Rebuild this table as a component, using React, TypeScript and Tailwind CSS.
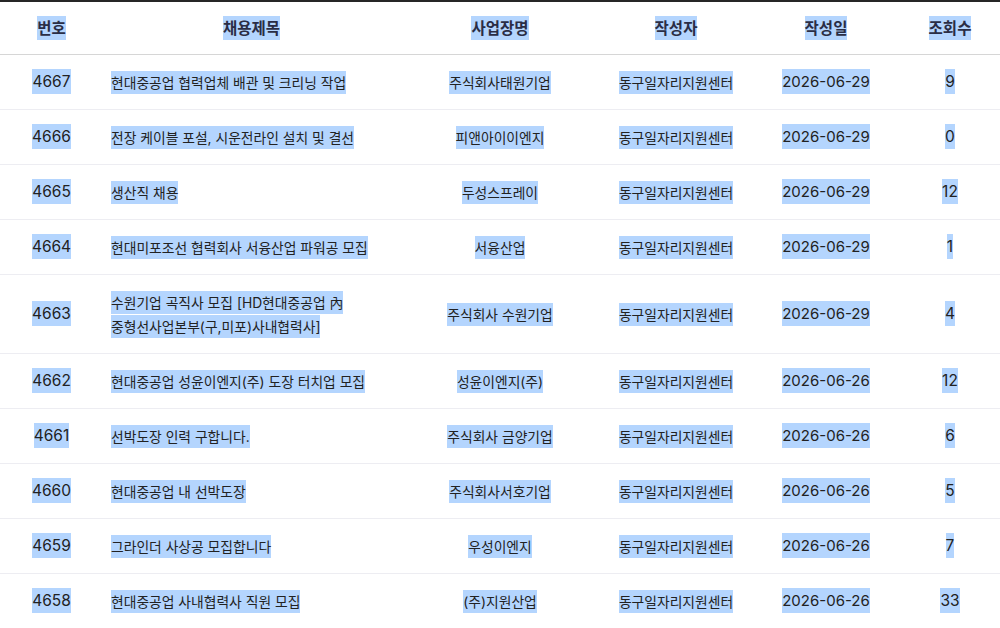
import React from "react";

type Post = {
  no: number;
  title: string;
  company: string;
  writer: string;
  date: string;
  views: number;
};

const posts: Post[] = [
  { no: 4667, title: "현대중공업 협력업체 배관 및 크리닝 작업", company: "주식회사태원기업", writer: "동구일자리지원센터", date: "2026-06-29", views: 9 },
  { no: 4666, title: "전장 케이블 포설, 시운전라인 설치 및 결선", company: "피앤아이이엔지", writer: "동구일자리지원센터", date: "2026-06-29", views: 0 },
  { no: 4665, title: "생산직 채용", company: "두성스프레이", writer: "동구일자리지원센터", date: "2026-06-29", views: 12 },
  { no: 4664, title: "현대미포조선 협력회사 서융산업 파워공 모집", company: "서융산업", writer: "동구일자리지원센터", date: "2026-06-29", views: 1 },
  { no: 4663, title: "수원기업 곡직사 모집 [HD현대중공업 內 중형선사업본부(구,미포)사내협력사]", company: "주식회사 수원기업", writer: "동구일자리지원센터", date: "2026-06-29", views: 4 },
  { no: 4662, title: "현대중공업 성윤이엔지(주) 도장 터치업 모집", company: "성윤이엔지(주)", writer: "동구일자리지원센터", date: "2026-06-26", views: 12 },
  { no: 4661, title: "선박도장 인력 구합니다.", company: "주식회사 금양기업", writer: "동구일자리지원센터", date: "2026-06-26", views: 6 },
  { no: 4660, title: "현대중공업 내 선박도장", company: "주식회사서호기업", writer: "동구일자리지원센터", date: "2026-06-26", views: 5 },
  { no: 4659, title: "그라인더 사상공 모집합니다", company: "우성이엔지", writer: "동구일자리지원센터", date: "2026-06-26", views: 7 },
  { no: 4658, title: "현대중공업 사내협력사 직원 모집", company: "(주)지원산업", writer: "동구일자리지원센터", date: "2026-06-26", views: 33 },
];

// selected-text look: light blue behind the glyphs only
function Sel({ children, kind }: { children: React.ReactNode; kind: "ko" | "num" | "head" }) {
  if (kind === "head") {
    return <span className="bg-[#b4d5fe] py-[2.5px] box-decoration-clone">{children}</span>;
  }
  if (kind === "num") {
    return <span className="bg-[#b4d5fe] py-[3px] box-decoration-clone">{children}</span>;
  }
  return <span className="bg-[#b4d5fe] py-[3.5px] box-decoration-clone">{children}</span>;
}

const headers = ["번호", "채용제목", "사업장명", "작성자", "작성일", "조회수"];

export default function App() {
  return (
    <div className="w-[1000px] h-[628px] overflow-hidden bg-white font-[Inter,'Noto_Sans_CJK_KR',sans-serif]">
      <table className="w-full table-fixed border-collapse border-t-2 border-[#262626]">
        <colgroup>
          <col className="w-[103px]" />
          <col className="w-[297px]" />
          <col className="w-[200px]" />
          <col className="w-[152px]" />
          <col className="w-[148px]" />
          <col className="w-[100px]" />
        </colgroup>
        <thead>
          <tr className="border-b border-[#d6d6d6]">
            {headers.map((h) => (
              <th
                key={h}
                className="py-[14px] text-center text-[15.5px] leading-[24px] font-bold text-[#2a2d45]"
              >
                <Sel kind="head">{h}</Sel>
              </th>
            ))}
          </tr>
        </thead>
        <tbody>
          {posts.map((p, i) => (
            <tr
              key={p.no}
              className={
                i === posts.length - 1
                  ? "border-b border-[#e4e4e8]"
                  : "border-b border-[#ededf2]"
              }
            >
              <td className="py-[15px] text-center text-[15.5px] leading-[24px] text-[#222]">
                <Sel kind="num">{p.no}</Sel>
              </td>
              <td className="py-[15px] pl-[8px] pr-[10px] text-left text-[13.8px] leading-[24px] text-[#222] break-keep">
                <Sel kind="ko">{p.title}</Sel>
              </td>
              <td className="py-[15px] text-center text-[13.8px] leading-[24px] text-[#222]">
                <Sel kind="ko">{p.company}</Sel>
              </td>
              <td className="py-[15px] text-center text-[13.8px] leading-[24px] text-[#222]">
                <Sel kind="ko">{p.writer}</Sel>
              </td>
              <td className="py-[15px] text-center text-[15px] leading-[24px] text-[#222]">
                <Sel kind="num">{p.date}</Sel>
              </td>
              <td className="py-[15px] text-center text-[15.5px] leading-[24px] text-[#222]">
                <Sel kind="num">{p.views}</Sel>
              </td>
            </tr>
          ))}
        </tbody>
      </table>
    </div>
  );
}
